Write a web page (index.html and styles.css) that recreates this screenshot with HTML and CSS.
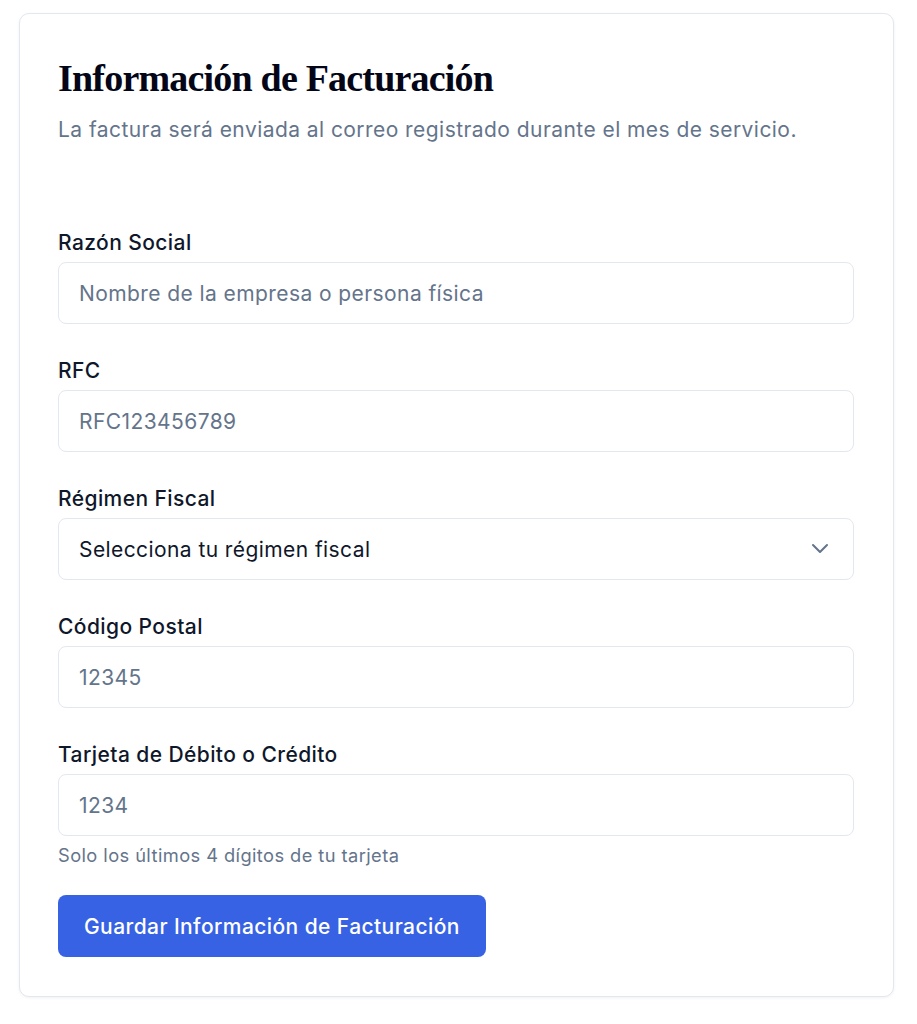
FILE: index.html
```html
<!DOCTYPE html>
<html lang="es">

<head>
    <meta charset="UTF-8">
    <meta name="viewport" content="width=device-width, initial-scale=1.0">
    <title>Información de Facturación</title>
    <link rel="stylesheet" href="styles.css">
</head>

<body>

    <div class="card">
        <div class="card-header">
            <h1>Información de Facturación</h1>
            <p class="subtitle">La factura será enviada al correo registrado durante el mes de servicio.</p>
        </div>

        <form class="billing-form">
            <div class="field">
                <label for="razon">Razón Social</label>
                <input type="text" id="razon" placeholder="Nombre de la empresa o persona física">
            </div>

            <div class="field">
                <label for="rfc">RFC</label>
                <input type="text" id="rfc" placeholder="RFC123456789">
            </div>

            <div class="field">
                <label for="regimen">Régimen Fiscal</label>
                <div class="select-wrap">
                    <select id="regimen">
                        <option>Selecciona tu régimen fiscal</option>
                    </select>
                    <svg class="chevron" width="24" height="24" viewBox="0 0 24 24" fill="none" stroke="currentColor" stroke-width="2" stroke-linecap="round" stroke-linejoin="round">
                        <path d="M5 9l7 7 7-7"></path>
                    </svg>
                </div>
            </div>

            <div class="field">
                <label for="cp">Código Postal</label>
                <input type="text" id="cp" placeholder="12345">
            </div>

            <div class="field field-last">
                <label for="tarjeta">Tarjeta de Débito o Crédito</label>
                <input type="text" id="tarjeta" placeholder="1234">
                <p class="help">Solo los últimos 4 dígitos de tu tarjeta</p>
            </div>

            <button type="button" class="btn-primary">Guardar Información de Facturación</button>
        </form>
    </div>

</body>

</html>
```

FILE: styles.css
```css
body {
    margin: 0;
    padding: 13px 23px 26px 19px;
    background: #ffffff;
    font-family: Inter, "Noto Sans", sans-serif;
    letter-spacing: 0.026em;
    color: #0f172a;
}

.card {
    background: #ffffff;
    border: 1px solid #e2e8f0;
    border-radius: 10px;
    box-shadow: 0 1px 3px rgba(15, 23, 42, 0.06);
    padding: 40px 39px 39px 38px;
}

.card-header {
    margin-bottom: 88px;
}

h1 {
    margin: 0;
    font-family: "Liberation Serif", serif;
    font-weight: 700;
    font-size: 38px;
    line-height: 48px;
    letter-spacing: -0.8px;
    color: #020617;
}

.subtitle {
    margin: 15px 0 0;
    font-size: 21px;
    line-height: 26px;
    letter-spacing: 0.021em;
    color: #64748b;
}

.field {
    display: flex;
    flex-direction: column;
    margin-bottom: 35px;
}

label {
    font-size: 21px;
    font-weight: 500;
    line-height: 24px;
    margin-bottom: 7px;
    color: #0f172a;
}

input,
select {
    height: 62px;
    box-sizing: border-box;
    border: 1px solid #e2e8f0;
    border-radius: 8px;
    padding: 0 20px;
    font-family: inherit;
    font-size: 21px;
    letter-spacing: inherit;
    color: #0f172a;
    background: #ffffff;
    outline: none;
}

input::placeholder {
    color: #64748b;
}

.select-wrap {
    position: relative;
}

select {
    width: 100%;
    appearance: none;
}

.chevron {
    position: absolute;
    right: 22px;
    top: 18px;
    color: #64748b;
    pointer-events: none;
}

.help {
    margin: 9px 0 0;
    font-size: 18.3px;
    line-height: 20px;
    color: #64748b;
}

.field-last {
    margin-bottom: 30px;
}

.btn-primary {
    height: 62px;
    padding: 0 26px;
    border: none;
    border-radius: 8px;
    background: #3762e4;
    color: #ffffff;
    font-family: inherit;
    font-size: 21px;
    font-weight: 500;
    letter-spacing: inherit;
}
```
